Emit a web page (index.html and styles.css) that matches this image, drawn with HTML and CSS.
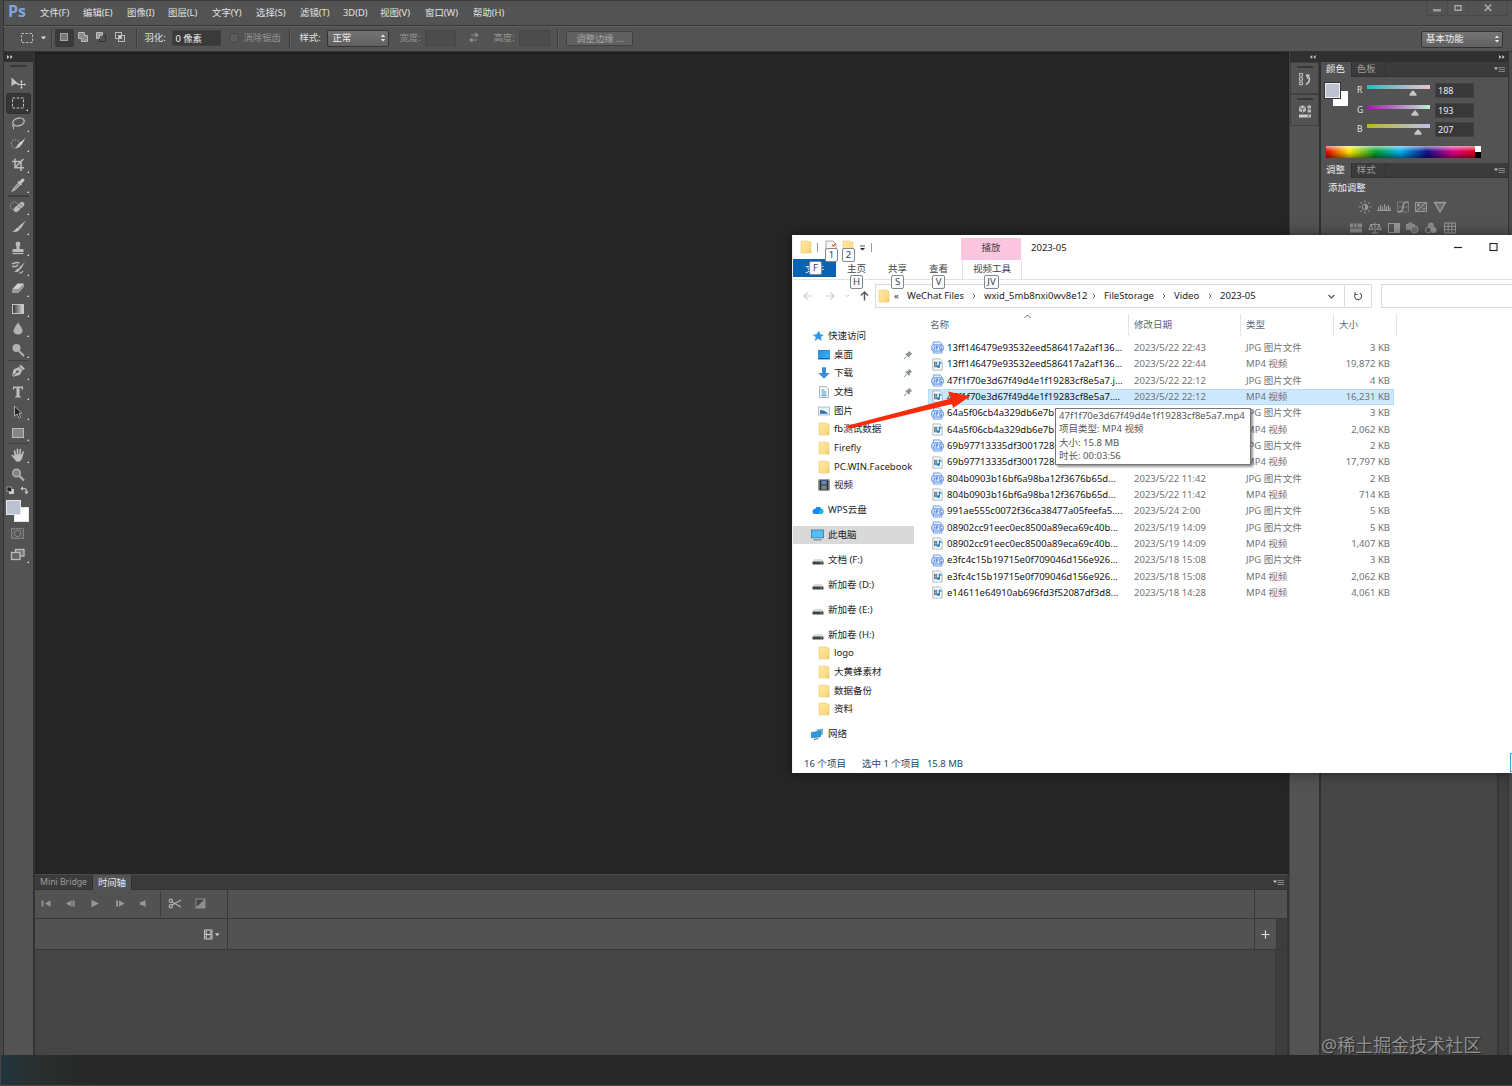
FILE: index.html
```html
<!DOCTYPE html>
<html lang="zh-CN">
<head>
<meta charset="utf-8">
<title>Photoshop</title>
<link rel="stylesheet" href="styles.css">
</head>
<body>
<svg class="defs" width="0" height="0">
  <defs>
    <linearGradient id="gFolder" x1="0" y1="0" x2="1" y2="1"><stop offset="0" stop-color="#ffe9a0"/><stop offset="1" stop-color="#f7d679"/></linearGradient>
    <linearGradient id="gTool" x1="0" y1="0" x2="1" y2="0"><stop offset="0" stop-color="#333"/><stop offset="1" stop-color="#ddd"/></linearGradient>
    <linearGradient id="gScreen" x1="0" y1="0" x2="1" y2="1"><stop offset="0" stop-color="#1a8fe0"/><stop offset="1" stop-color="#43b4f5"/></linearGradient>
  </defs>
  <symbol id="folder" viewBox="0 0 12 14"><path d="M1 1h7.500l1 1H11v11H1z" fill="url(#gFolder)" stroke="#eacb78" stroke-width=".6"/><path d="M9.500 9.500h1.600V13H9.500z" fill="#efc659"/></symbol>
  <symbol id="jpg" viewBox="0 0 14 14"><path d="M2.500 5V1h7l2 2v2M2.500 10.500V13h9v-2.500" fill="#e6effc" stroke="#5f8fe2" stroke-width=".9"/><rect x=".8" y="4.200" width="12.400" height="6.600" rx="2" fill="#e6effc" stroke="#4a80e0" stroke-width="1"/><path d="M3.600 5.600v3q0 .8-1.300.5M5.600 9.700V5.600h1.600v2H5.700M11.600 5.800H9.500v3.600h2V7.900h-.8" fill="none" stroke="#3f76dc" stroke-width=".9"/></symbol>
  <symbol id="mp4" viewBox="0 0 12 14"><path d="M1 1h7.500L11 3.500V13H1z" fill="#fbfcfd" stroke="#98a2aa" stroke-width=".8"/><path d="M2.200 4h3.600v6H2.200z" fill="#5a7588"/><path d="M3 5.200h2M3 7h2M3 8.800h2" stroke="#bdd4e4" stroke-width=".8"/><path d="M8 3.800v5.400M8 4l2.200 2" stroke="#1681d2" stroke-width="1.200" fill="none"/><circle cx="7" cy="9.300" r="1.600" fill="#1681d2"/></symbol>
  <symbol id="pin" viewBox="0 0 10 10"><path d="M6 .8 9.200 4 8 4.500 6.700 5.800 6.300 8 2 3.700 4.200 3.300 5.500 2z" fill="#8a9096"/><path d="M3.800 6.200 1 9" stroke="#8a9096" stroke-width="1"/></symbol>
  <symbol id="drive" viewBox="0 0 12 12"><path d="M2.500 5h7L11.500 7.500H.5z" fill="#d9dcde"/><path d="M.5 7.500h11v3H.5z" fill="#3e4347"/><path d="M8.500 8.800h1.600" stroke="#7fc07f" stroke-width=".8"/></symbol>
  <symbol id="chev" viewBox="0 0 6 8"><path d="M2 2 4 4 2 6" fill="none" stroke="#555" stroke-width="1"/></symbol>
  <symbol id="pmenu" viewBox="0 0 11 8"><path d="M0 1.500h4L2 4z" fill="#c8c8c8"/><path d="M4.500 1.500H11M4.500 3.500H11M4.500 5.500H11" stroke="#8d8d8d" stroke-width=".9"/></symbol>
  <symbol id="updown" viewBox="0 0 6 8"><path d="M.8 3 3 .6 5.200 3zM.8 5 3 7.400 5.200 5z" fill="#e6e6e6"/></symbol>
</svg>

<div class="app">
  <header class="menubar">
    <div class="ps">Ps</div>
    <nav class="menus"><span>文件(F)</span><span>编辑(E)</span><span>图像(I)</span><span>图层(L)</span><span>文字(Y)</span><span>选择(S)</span><span>滤镜(T)</span><span>3D(D)</span><span>视图(V)</span><span>窗口(W)</span><span>帮助(H)</span></nav>
    <div class="winctl">
      <span><svg width="10" height="10"><path d="M1 6h8v2.500H1z" fill="#9b9b9b"/></svg></span>
      <span><svg width="10" height="10"><path d="M2 2.800h6v4.400H2z" fill="none" stroke="#a8a8a8" stroke-width="1.400"/></svg></span>
      <span class="close"><svg width="10" height="10"><path d="M1.800 1.500 8.200 8M8.200 1.500 1.800 8" stroke="#b0b0b0" stroke-width="1.500"/></svg></span>
    </div>
  </header>

  <div class="optbar">
    <svg class="o-marq" width="14" height="12"><rect x="1.500" y="1.500" width="11" height="9" fill="none" stroke="#bdbdbd" stroke-dasharray="2.500 1.500"/></svg>
    <svg class="o-caret" width="5" height="4"><path d="M0 .5h5L2.500 3.500z" fill="#e0e0e0"/></svg>
    <i class="vsep"></i>
    <div class="modes">
      <span class="on"><svg width="12" height="12"><rect x="2.500" y="1.500" width="7" height="7" fill="#777" stroke="#a5a5a5"/></svg></span>
      <span><svg width="12" height="12"><path d="M1.500 .5h6v3h3v6h-6v-3h-3z" fill="#8d8d8d" stroke="#bbb"/></svg></span>
      <span><svg width="12" height="12"><path d="M1.500 .5h6v3h-3v3h-3z" fill="#999" stroke="#bbb"/><path d="M7.500 3.500h3v6h-6v-3" fill="none" stroke="#333"/></svg></span>
      <span><svg width="12" height="12"><rect x="1.500" y=".5" width="6" height="6" fill="none" stroke="#bbb"/><rect x="4.500" y="3.500" width="6" height="6" fill="none" stroke="#bbb"/><path d="M5 4h2v2H5z" fill="#ccc"/></svg></span>
    </div>
    <i class="vsep s2"></i>
    <span class="w-feather">羽化:</span><span class="field f1">0 像素</span>
    <i class="check"></i><span class="dim w-aa">消除锯齿</span>
    <i class="vsep s3"></i>
    <span class="w-style">样式:</span><span class="select sel1">正常<svg width="6" height="8"><use href="#updown"/></svg></span>
    <span class="dim w-w">宽度:</span><span class="field dis"></span>
    <svg class="swap" width="12" height="12"><path d="M3 3h5M4 8h5" stroke="#8f8f8f" stroke-width="1.200"/><path d="M7.500.3 11 3 7.500 5.700zM4.500 5.300 1 8l3.500 2.700z" fill="#8f8f8f"/></svg>
    <span class="dim w-h">高度:</span><span class="field dis"></span>
    <i class="vsep s4"></i>
    <span class="btn">调整边缘 ...</span>
    <span class="select sel2">基本功能<svg width="6" height="8"><use href="#updown"/></svg></span>
  </div>

  <main class="work">
    <aside class="tools">
      <div class="strip"><svg width="8" height="6"><path d="M1 1 3.300 3 1 5zM4.300 1l2.300 2-2.300 2z" fill="#ccc"/></svg></div>
      <div class="grip"></div>
      <div class="tool nf"><svg width="18" height="18"><path d="M2.500 3.500v9l2.600-2.200 4.400-.6z" fill="#c4c4c4"/><path d="M12.500 7v7M9 10.500h7" stroke="#c4c4c4" stroke-width="1.100"/><path d="M12.500 6 14 7.800h-3zM12.500 15 14 13.200h-3zM8 10.500l1.800-1.500v3zM17 10.500l-1.800-1.500v3z" fill="#c4c4c4"/></svg></div>
      <div class="tool active"><svg width="18" height="18"><rect x="3.500" y="4" width="11" height="10" fill="none" stroke="#c4c4c4" stroke-dasharray="2.700 1.500"/></svg></div>
      <div class="tool"><svg width="18" height="18"><ellipse cx="9.500" cy="7" rx="5.800" ry="3.800" transform="rotate(-15 9.500 7)" fill="none" stroke="#bababa" stroke-width="1.400"/><path d="M5 9.500q-2 .2-1.500 1.700t2-.1M4.500 11.800v2.500" fill="none" stroke="#bababa"/></svg></div>
      <div class="tool"><svg width="18" height="18"><circle cx="6.500" cy="9" r="4.300" fill="none" stroke="#aaa" stroke-dasharray="1.500 1.200"/><path d="M16.500 3 10 8.500l2 2z" fill="#ddd"/><path d="M10.500 8.500q-2 .3-2.500 2.500-.8 1.500-2.500 1.500 5 1.500 6.600-2.400z" fill="#c9c9c9"/></svg></div>
      <div class="tool"><svg width="18" height="18"><path d="M6 2.500v9.300h9M3 5.500h9v9.500M14.500 3l-8 8" fill="none" stroke="#bcbcbc" stroke-width="1.500"/></svg></div>
      <div class="tool"><svg width="18" height="18"><path d="m10 6 2.800-3.300q1.400-.7 2.200.2t.2 2.200L12 8z" fill="#c8c8c8"/><path d="m9 5.500 3.500 3.500" stroke="#c8c8c8" stroke-width="1.500"/><path d="M10 7 4.500 12.500 3.500 15l2.300-1.200L11.200 8.500" fill="none" stroke="#bbb" stroke-width="1.200"/></svg></div>
      <i class="hsep"></i>
      <div class="tool"><svg width="18" height="18"><circle cx="5.500" cy="8" r="4" fill="none" stroke="#aaa" stroke-dasharray="1.500 1.200"/><rect x="3.500" y="6.500" width="13" height="5" rx="2.500" transform="rotate(-42 10 9)" fill="#b9b9b9"/><path d="m8.300 7.200 3.500 3.800M10.500 5.500l3 3.200" stroke="#666" stroke-width=".8"/></svg></div>
      <div class="tool"><svg width="18" height="18"><path d="M17 2.500 9 9l2.300 2z" fill="#c2c2c2"/><path d="M9 9.500q-2 .2-3 2.400-1 1.500-3.500 1.600 6 1.500 8.500-2.200z" fill="#c2c2c2"/></svg></div>
      <div class="tool"><svg width="18" height="18"><path d="M7.500 7.500C6 5.500 6.500 2.500 9 2.500s3 3 1.500 5V10h4v3h-11v-3h4z" fill="#bcbcbc"/><path d="M3.500 14.500h11" stroke="#bcbcbc" stroke-width="1.200"/></svg></div>
      <div class="tool"><svg width="18" height="18"><path d="M16 3 9.800 8.700l1.700 1.700zM9.600 9.300q-2 .3-2.500 2-.9 1.200-2.600 1.200 4.500 1.500 6.500-1.700z" fill="#bebebe"/><path d="M10.500 4.200q-3-1.500-5.500.3h-2M3 7.500h4l2-2M10.500 14q2.500 0 3.500-2" fill="none" stroke="#bbb" stroke-width="1.300"/></svg></div>
      <div class="tool"><svg width="18" height="18"><path d="m3 10.500 5.500-6h6.500l-5.500 6z" fill="#d0d0d0"/><path d="M3 10.500h6.500v3.500H3zM9.500 10.500l5.500-6v3.500L9.500 14z" fill="#9b9b9b"/></svg></div>
      <div class="tool"><svg width="18" height="18"><rect x="3.500" y="4.500" width="11" height="9" fill="url(#gTool)" stroke="#c4c4c4"/></svg></div>
      <div class="tool"><svg width="18" height="18"><path d="M9 2.500q4.500 6 4.500 8.200c0 5-9 5-9 0C4.500 8.500 9 2.500 9 2.500" fill="#b2b2b2"/></svg></div>
      <div class="tool"><svg width="18" height="18"><circle cx="7.500" cy="7" r="4" fill="#b2b2b2"/><path d="m10 10 5 5" stroke="#b2b2b2" stroke-width="2"/></svg></div>
      <i class="hsep"></i>
      <div class="tool"><svg width="18" height="18"><path d="m3 15 1.500-7.500L10 5l3.300 3.300L10.700 13z" fill="#bcbcbc"/><path d="m11 3.500 4 4" stroke="#bcbcbc" stroke-width="2.400"/><path d="m3 15 5-5" stroke="#555"/><circle cx="8.500" cy="9.500" r="1.200" fill="#555"/></svg></div>
      <div class="tool"><svg width="18" height="18"><path d="M4 3.500h10v3h-.9q-.3-1.700-2.600-1.700V12.500q0 1 1.500 1.200v.8H6v-.8q1.500-.2 1.500-1.200V4.800q-2.300 0-2.600 1.700H4z" fill="#bdbdbd"/></svg></div>
      <div class="tool"><svg width="18" height="18"><path d="M5.500 3v10.200L8 11l2 4 1.800-1-2-3.700h3z" fill="#222" stroke="#b5b5b5" stroke-width=".9"/></svg></div>
      <div class="tool"><svg width="18" height="18"><rect x="3.500" y="4.500" width="11" height="9" fill="#858585" stroke="#b8b8b8"/></svg></div>
      <i class="hsep"></i>
      <div class="tool"><svg width="18" height="18"><path d="M6 12.500 3.300 9.500M6.500 10 5.600 5M8.500 9V3.200M10.800 9l.6-5.500M12.800 10l1.400-4" stroke="#bfbfbf" stroke-width="1.600" stroke-linecap="round"/><path d="M5.500 8.500h8.300l-.8 4-2 3H7.300L5 12.500z" fill="#bfbfbf"/></svg></div>
      <div class="tool nf"><svg width="18" height="18"><circle cx="7.500" cy="7" r="3.800" fill="#858585" stroke="#b2b2b2" stroke-width="1.400"/><path d="m10.500 10 4.500 4.500" stroke="#b2b2b2" stroke-width="2.200"/></svg></div>
      <div class="mini"><svg width="9" height="9"><rect x="3" y="3" width="5" height="5" fill="#ccc"/><rect x="1" y="1" width="4.500" height="4.500" fill="#222" stroke="#aaa" stroke-width=".8"/></svg><svg width="9" height="9"><path d="M2.500 2.500h2q2 0 2 3.500" fill="none" stroke="#c4c4c4" stroke-width="1.200"/><path d="M3 .3v4.400L.3 2.500zM4.300 5.500h4.400L6.500 8.500z" fill="#c4c4c4"/></svg></div>
      <div class="swatch"><i></i><b></b></div>
      <div class="tool nf qm"><svg width="18" height="18"><rect x="2.500" y="3.500" width="12" height="10" fill="#606060" stroke="#989898" stroke-dasharray="1.500 .8"/><circle cx="8.500" cy="8.500" r="3" fill="#555" stroke="#a5a5a5" stroke-dasharray="1.500 .8"/></svg></div>
      <div class="tool"><svg width="18" height="18"><rect x="6.500" y="3.500" width="8.500" height="6.500" fill="#777" stroke="#bcbcbc" stroke-width="1.300"/><rect x="2.500" y="6.500" width="8.500" height="7" fill="#666" stroke="#bcbcbc" stroke-width="1.300"/></svg></div>
    </aside>

    <section class="center">
      <div class="canvas"></div>
      <div class="timeline">
        <div class="tabs bt"><span class="tab">Mini Bridge</span><span class="tab on">时间轴</span><svg class="pm" width="11" height="8"><use href="#pmenu"/></svg></div>
        <div class="trow r1">
          <div class="ctl">
            <svg width="12" height="10"><path d="M2.500 1.500v6" stroke="#969696" stroke-width="1.800"/><path d="M10.500 1.300v6.400L5 4.500z" fill="#969696"/></svg>
            <svg width="12" height="10"><path d="M6.500 1.300v6.400L1 4.500zM7.500 1.500h2v6h-2z" fill="#969696"/></svg>
            <svg width="12" height="10"><path d="M2.500.8v7.400L10 4.500z" fill="#969696"/></svg>
            <svg width="12" height="10"><path d="M5 1.300v6.400L10.500 4.500zM2 1.500h2v6H2z" fill="#969696"/></svg>
            <svg width="12" height="10"><path d="M2 3h1.800L7.500 1v7L3.800 6H2z" fill="#969696"/></svg>
            <i></i>
            <svg class="cut" width="14" height="12"><path d="M4 4 13 9M4 7 13 2" stroke="#b0b0b0" stroke-width="1.300"/><circle cx="2.800" cy="2.700" r="1.600" fill="none" stroke="#b0b0b0" stroke-width="1.200"/><circle cx="2.800" cy="8.300" r="1.600" fill="none" stroke="#b0b0b0" stroke-width="1.200"/></svg>
            <svg class="fx" width="12" height="12"><path d="M.5.500h10v10H.5z" fill="#8e8e8e"/><path d="M1.500 1.500h8L1.500 9z" fill="#444"/></svg>
          </div><div class="track"></div><div class="tend"></div>
        </div>
        <div class="trow r2">
          <div class="ctl film"><svg width="18" height="11"><path d="M1 .5h8.500v10H1z" fill="#c5c5c5"/><path d="M2.500 1v9M8 1v9" stroke="#555" stroke-dasharray="1.500 1"/><path d="M3.800 1.800h3v3h-3zM3.800 6.200h3v3h-3z" fill="#444"/><path d="M12 4.500h4.500L14.200 7z" fill="#ddd"/></svg></div><div class="track"></div><div class="plus"><svg width="9" height="9"><path d="M4.500.5v8M.5 4.500h8" stroke="#e6e6e6" stroke-width="1.200"/></svg></div><div class="gut"></div>
        </div>
        <div class="tbody"><i></i></div>
      </div>
    </section>

    <aside class="dock">
      <div class="strip r"><svg width="8" height="6"><path d="M3.300 1 1 3l2.300 2zM6.600 1 4.300 3l2.300 2z" fill="#ccc"/></svg></div>
      <div class="dk"><em></em><svg width="14" height="14"><path d="M1.500 .5h3v2.500h-3zM1.500 4.800h3v2.500h-3zM1.500 9.100h3v2.500h-3z" fill="none" stroke="#b5b5b5" stroke-width="1.100"/><path d="M8 11.500q4.500-2.500 3-7.500" fill="none" stroke="#c8c8c8" stroke-width="1.600"/><path d="M7.500 1.500h4.500L9.500 6z" fill="#c8c8c8"/></svg></div>
      <div class="dk"><em></em><svg width="14" height="14"><path d="M4.500.3 8 2v4L4.500 7.700 1 6V2z" fill="#bbb"/><path d="M1.500 2.500 4.500 4 7.500 2.500M4.500 4v3.500" stroke="#555" fill="none" stroke-width=".8"/><path d="M9.500.5H13v3H9.500zM9.500 4.500H13v3H9.500z" fill="#bbb"/><path d="M1 9.500h12v3H1z" fill="#ccc"/><path d="M9.500 11h2" stroke="#444"/></svg></div>
    </aside>

    <aside class="panels">
      <div class="strip r"><svg width="8" height="6"><path d="M1 1 3.300 3 1 5zM4.300 1l2.300 2-2.300 2z" fill="#ccc"/></svg></div>
      <div class="tabs"><span class="tab on">颜色</span><span class="tab">色板</span><svg class="pm" width="11" height="8"><use href="#pmenu"/></svg></div>
      <div class="color">
        <div class="cw"><i></i><b></b></div>
        <div class="sliders">
          <div class="sl"><label>R</label><div class="bar cr"><svg width="8" height="6"><path d="M4 0 7.500 4v1.700h-7V4z" fill="#c4c4c4"/></svg></div><output>188</output></div>
          <div class="sl"><label>G</label><div class="bar cg"><svg width="8" height="6"><path d="M4 0 7.500 4v1.700h-7V4z" fill="#c4c4c4"/></svg></div><output>193</output></div>
          <div class="sl"><label>B</label><div class="bar cb"><svg width="8" height="6"><path d="M4 0 7.500 4v1.700h-7V4z" fill="#c4c4c4"/></svg></div><output>207</output></div>
        </div>
      </div>
      <div class="spec"><i></i></div>
      <div class="tabs"><span class="tab on">调整</span><span class="tab">样式</span><svg class="pm" width="11" height="8"><use href="#pmenu"/></svg></div>
      <div class="adj">
        <p>添加调整</p>
        <div class="ar">
          <svg width="14" height="14"><circle cx="7" cy="7" r="2.800" fill="none" stroke="#aaa"/><path d="M7 4.200a2.800 2.800 0 0 1 0 5.600z" fill="#aaa"/><path d="M7 .5v2M7 11.500v2M.5 7h2M11.500 7h2M2.400 2.400l1.300 1.300M10.300 10.300l1.300 1.300M2.400 11.600l1.300-1.300M10.300 3.700l1.300-1.300" stroke="#aaa" stroke-width="1.100"/></svg>
          <svg width="14" height="14"><path d="M0 10.500h14M1.500 10V7M3.500 10V5M5.500 10V6.500M7.500 10V4M9.500 10V6M11.500 10V5M13 10V7.500" stroke="#aaa" stroke-width="1.200"/></svg>
          <svg width="14" height="14"><path d="M1.500 2h11v10h-11zM1.500 7h11M7 2v10" fill="none" stroke="#858585"/><path d="M1.500 12Q7 12 7 7t5.500-5" fill="none" stroke="#bbb" stroke-width="1.200"/></svg>
          <svg width="14" height="14"><path d="M1.500 2.500h11v9h-11z" fill="#666" stroke="#aaa"/><path d="m2 11.500 10-9M3 5h3M4.500 3.500v3M8.500 9h3" stroke="#bbb"/></svg>
          <svg width="14" height="14"><path d="M1.500 2.500h11L7 12z" fill="#777" stroke="#b0b0b0" stroke-width="1.300"/></svg>
        </div>
        <div class="ar a2">
          <svg width="14" height="14"><path d="M1 2.500h12v9H1z" fill="#999"/><path d="M4.500 2.500v4M8 2.500v4M1 7h12" stroke="#555"/></svg>
          <svg width="14" height="14"><path d="M7 1.500v10M2 3.500h10M4 12h6M3 4 1 8.500h4zM11 4 9 8.500h4z" fill="none" stroke="#aaa" stroke-width="1.100"/></svg>
          <svg width="14" height="14"><path d="M1.500 2.500h11v9h-11z" fill="none" stroke="#aaa"/><path d="M7 3h5v8H7z" fill="#aaa"/></svg>
          <svg width="14" height="14"><path d="M1 3h2l1-1.500h3L8 3h2v6H1z" fill="#999"/><circle cx="9.500" cy="8.500" r="3.500" fill="#777" stroke="#aaa"/></svg>
          <svg width="14" height="14"><circle cx="7" cy="4.500" r="3" fill="#999"/><circle cx="4.500" cy="9" r="3" fill="none" stroke="#aaa"/><circle cx="9.500" cy="9" r="3" fill="#aaa"/></svg>
          <svg width="14" height="14"><path d="M1.500 2h11v10h-11zM1.500 5.300h11M1.500 8.600h11M5.200 2v10M8.800 2v10" fill="none" stroke="#aaa"/></svg>
        </div>
      </div>
      <div class="rest"><i></i></div>
    </aside>
    <div class="edge"></div>
  </main>
  <div class="watermark">@稀土掘金技术社区</div>
</div>
<footer class="taskbar"></footer>

<section class="explorer">
  <div class="xtitle">
    <svg class="t1" width="12" height="14"><use href="#folder"/></svg><i class="tb"></i>
    <svg class="t2" width="12" height="14"><path d="M1 1h7l3 3v9H1z" fill="#f5f5f5" stroke="#999" stroke-width=".8"/><path d="m7 5 1.500 1L10.500 3.500" stroke="#e0522c" fill="none" stroke-width="1.200"/></svg>
    <svg class="t3" width="12" height="14"><use href="#folder"/></svg>
    <svg class="t4" width="7" height="7"><path d="M1 2h5" stroke="#222" stroke-width=".8"/><path d="M1 4h5L3.500 6.500z" fill="#222"/></svg><i class="tb"></i>
    <span class="play">播放</span><span class="tt">2023-05</span>
    <svg class="xm" width="9" height="9"><path d="M0 4.500h8" stroke="#222" stroke-width="1.200"/></svg>
    <svg class="xx" width="9" height="9"><rect x="1" y=".5" width="7" height="7" fill="none" stroke="#222" stroke-width="1.100"/></svg>
  </div>
  <div class="xtabs"><span class="file">文件</span><span class="h1">主页</span><span class="h2">共享</span><span class="h3">查看</span><span class="h4">视频工具</span></div>
  <kbd class="k1">1</kbd><kbd class="k2">2</kbd><kbd class="kf">F</kbd><kbd class="kh">H</kbd><kbd class="ks">S</kbd><kbd class="kv">V</kbd><kbd class="kj">JV</kbd>
  <div class="xaddr">
    <svg class="nav" width="70" height="12"><path d="M9 6H1M4.500 2.500 1 6l3.500 3.500M23 6h8M27.500 2.500 31 6l-3.500 3.500" fill="none" stroke="#ccc" stroke-width="1.100"/><path d="m42.500 5 1.700 1.500L46 5" fill="none" stroke="#bbb" stroke-width=".8"/><path d="M61.500 10.500V2M58 5.500 61.500 2 65 5.500" fill="none" stroke="#555" stroke-width="1.400"/></svg>
    <div class="box"><svg width="12" height="14"><use href="#folder"/></svg><span class="c0">«</span><span class="c1">WeChat Files</span><svg class="cv" width="6" height="8"><use href="#chev"/></svg><span class="c2">wxid_5mb8nxi0wv8e12</span><svg class="cv" width="6" height="8"><use href="#chev"/></svg><span class="c3">FileStorage</span><svg class="cv" width="6" height="8"><use href="#chev"/></svg><span class="c4">Video</span><svg class="cv" width="6" height="8"><use href="#chev"/></svg><span class="c5">2023-05</span><svg class="dd" width="9" height="7"><path d="m1.500 2 3 3 3-3" fill="none" stroke="#555" stroke-width="1.200"/></svg></div>
    <div class="refresh"><svg width="10" height="10"><path d="M2.600 2.700A3.500 3.500 0 1 0 7 2.200" fill="none" stroke="#555" stroke-width="1.100"/><path d="M2 1v2.500h2.700" fill="none" stroke="#555"/></svg></div>
    <div class="search"></div>
  </div>
  <div class="xbody">
    <nav class="side">
      <div class="n"><svg width="12" height="12"><path d="m7 .8 1.300 3.400 3.600.5-2.900 2.200.5 4L6.300 8.700 2.500 11 3.800 7 .5 4.700l3.700-.3z" fill="#2d9be8"/></svg>快速访问</div>
      <div class="n s"><svg width="12" height="12"><rect x=".3" y="1.300" width="11.400" height="8.800" fill="url(#gScreen)" stroke="#0e78c4" stroke-width=".6"/><path d="M1 9.500h10" stroke="#0c5fa5"/></svg>桌面<svg class="pin" width="10" height="10"><use href="#pin"/></svg></div>
      <div class="n s"><svg width="12" height="12"><path d="M4 .3h4V6h3.700L6 11.800.3 6H4z" fill="#3c8edb"/></svg>下载<svg class="pin" width="10" height="10"><use href="#pin"/></svg></div>
      <div class="n s"><svg width="12" height="12"><path d="M1.500.5h6.700L10.500 3v8.500h-9z" fill="#f4f9fc" stroke="#8c9aa5" stroke-width=".7"/><path d="M3.500 4h3M3.500 6h5M3.500 8h5M3.500 9.800h5" stroke="#4d98cc"/></svg>文档<svg class="pin" width="10" height="10"><use href="#pin"/></svg></div>
      <div class="n s"><svg width="12" height="12"><rect x=".5" y="2" width="11" height="8" fill="#e9f3fa" stroke="#9aa6ae" stroke-width=".7"/><path d="M2 8.800V5l3 .5 2.500 1 2.800 2.300z" fill="#2b6fae"/></svg>图片</div>
      <div class="n s"><svg width="12" height="14"><use href="#folder"/></svg>fb测试数据</div>
      <div class="n s"><svg width="12" height="14"><use href="#folder"/></svg>Firefly</div>
      <div class="n s"><svg width="12" height="14"><use href="#folder"/></svg>PC.WIN.Facebook</div>
      <div class="n s"><svg width="12" height="12"><path d="M.5.500h11v11H.5z" fill="#30363c"/><path d="M3.200 1.500h5.600v4H3.200z" fill="#588bb5"/><path d="M3.200 6.500h5.600v4H3.200z" fill="#7d8a78"/><path d="M1.500 1v10M10.500 1v10" stroke="#ccc" stroke-width=".8" stroke-dasharray="1 1.200"/></svg>视频</div>
      <div class="n g"><svg width="12" height="12"><path d="M3 10a2.500 2.500 0 0 1 0-5 3.500 3.500 0 0 1 6.500 0A2.600 2.600 0 0 1 9.500 10z" fill="#1c86ee"/><path d="M6.500 10 9 4.500A2.800 2.800 0 0 1 9.500 10z" fill="#18c1d8"/></svg>WPS云盘</div>
      <div class="n g pc"><svg width="13" height="12"><rect x=".5" y="1" width="12" height="7.800" fill="#53bdf4" stroke="#3678a8" stroke-width=".8"/><path d="M2.500 10.800h8" stroke="#6f8796" stroke-width="1.200"/></svg>此电脑</div>
      <div class="n g"><svg width="12" height="12"><use href="#drive"/></svg>文档 (F:)</div>
      <div class="n g"><svg width="12" height="12"><use href="#drive"/></svg>新加卷 (D:)</div>
      <div class="n g"><svg width="12" height="12"><use href="#drive"/></svg>新加卷 (E:)</div>
      <div class="n g"><svg width="12" height="12"><use href="#drive"/></svg>新加卷 (H:)</div>
      <div class="n s"><svg width="12" height="14"><use href="#folder"/></svg>logo</div>
      <div class="n s"><svg width="12" height="14"><use href="#folder"/></svg>大黄蜂素材</div>
      <div class="n s"><svg width="12" height="14"><use href="#folder"/></svg>数据备份</div>
      <div class="n s"><svg width="12" height="14"><use href="#folder"/></svg>资料</div>
      <div class="n g net"><svg width="13" height="12"><path d="M5 1.500 12 .5v6l-2 1z" fill="#6fb6e4"/><path d="m.5 4.500 9-1.500v5.800l-9 1z" fill="#2c9be2" stroke="#1c6da5" stroke-width=".6"/><path d="M3 11.300 7.500 10.500" stroke="#5a7d93" stroke-width="1.200"/></svg>网络</div>
    </nav>
    <div class="list">
      <div class="head"><span>名称</span><span>修改日期</span><span>类型</span><span>大小</span><svg class="sort" width="7" height="5"><path d="M.5 4 3.500 1l3 3" fill="none" stroke="#666"/></svg></div>
      <div class="row"><svg width="13" height="13"><use href="#jpg"/></svg><span>13ff146479e93532eed586417a2af136...</span><span>2023/5/22 22:43</span><span>JPG 图片文件</span><span>3 KB</span></div>
      <div class="row"><svg width="13" height="13"><use href="#mp4"/></svg><span>13ff146479e93532eed586417a2af136...</span><span>2023/5/22 22:44</span><span>MP4 视频</span><span>19,872 KB</span></div>
      <div class="row"><svg width="13" height="13"><use href="#jpg"/></svg><span>47f1f70e3d67f49d4e1f19283cf8e5a7.j...</span><span>2023/5/22 22:12</span><span>JPG 图片文件</span><span>4 KB</span></div>
      <div class="row sel"><svg width="13" height="13"><use href="#mp4"/></svg><span>47f1f70e3d67f49d4e1f19283cf8e5a7....</span><span>2023/5/22 22:12</span><span>MP4 视频</span><span>16,231 KB</span></div>
      <div class="row"><svg width="13" height="13"><use href="#jpg"/></svg><span>64a5f06cb4a329db6e7b</span><span></span><span>JPG 图片文件</span><span>3 KB</span></div>
      <div class="row"><svg width="13" height="13"><use href="#mp4"/></svg><span>64a5f06cb4a329db6e7b</span><span></span><span>MP4 视频</span><span>2,062 KB</span></div>
      <div class="row"><svg width="13" height="13"><use href="#jpg"/></svg><span>69b97713335df3001728</span><span></span><span>JPG 图片文件</span><span>2 KB</span></div>
      <div class="row"><svg width="13" height="13"><use href="#mp4"/></svg><span>69b97713335df3001728</span><span></span><span>MP4 视频</span><span>17,797 KB</span></div>
      <div class="row"><svg width="13" height="13"><use href="#jpg"/></svg><span>804b0903b16bf6a98ba12f3676b65d...</span><span>2023/5/22 11:42</span><span>JPG 图片文件</span><span>2 KB</span></div>
      <div class="row"><svg width="13" height="13"><use href="#mp4"/></svg><span>804b0903b16bf6a98ba12f3676b65d...</span><span>2023/5/22 11:42</span><span>MP4 视频</span><span>714 KB</span></div>
      <div class="row"><svg width="13" height="13"><use href="#jpg"/></svg><span>991ae555c0072f36ca38477a05feefa5....</span><span>2023/5/24 2:00</span><span>JPG 图片文件</span><span>5 KB</span></div>
      <div class="row"><svg width="13" height="13"><use href="#jpg"/></svg><span>08902cc91eec0ec8500a89eca69c40b...</span><span>2023/5/19 14:09</span><span>JPG 图片文件</span><span>5 KB</span></div>
      <div class="row"><svg width="13" height="13"><use href="#mp4"/></svg><span>08902cc91eec0ec8500a89eca69c40b...</span><span>2023/5/19 14:09</span><span>MP4 视频</span><span>1,407 KB</span></div>
      <div class="row"><svg width="13" height="13"><use href="#jpg"/></svg><span>e3fc4c15b19715e0f709046d156e926...</span><span>2023/5/18 15:08</span><span>JPG 图片文件</span><span>3 KB</span></div>
      <div class="row"><svg width="13" height="13"><use href="#mp4"/></svg><span>e3fc4c15b19715e0f709046d156e926...</span><span>2023/5/18 15:08</span><span>MP4 视频</span><span>2,062 KB</span></div>
      <div class="row"><svg width="13" height="13"><use href="#mp4"/></svg><span>e14611e64910ab696fd3f52087df3d8...</span><span>2023/5/18 14:28</span><span>MP4 视频</span><span>4,061 KB</span></div>
    </div>
  </div>
  <div class="status"><span>16 个项目</span><span>选中 1 个项目</span><span>15.8 MB</span><i></i></div>
  <div class="tip">47f1f70e3d67f49d4e1f19283cf8e5a7.mp4<br>项目类型: MP4 视频<br>大小: 15.8 MB<br>时长: 00:03:56</div>
  <svg class="arrow" width="130" height="44"><path d="M4 36 109 8.500 106 1.500 128 6.500 111 18 110 14 8 38.500z" fill="#fb2b08"/></svg>
</section>
</body>
</html>
```
FILE: styles.css
```css
* { box-sizing: border-box; }
body { margin: 0; width: 1512px; height: 1086px; overflow: hidden; background: #272727; color: #e2e2e2; font: 9.400px/14px "Noto Sans", "Noto Sans CJK SC", sans-serif; display: flex; flex-direction: column; }
svg { display: block; flex: none; }
span { white-space: nowrap; }
i, b, em { display: block; font-style: normal; }
.defs { position: absolute; }
.app { position: relative; height: 1055px; display: flex; flex-direction: column; background: #535353; border-left: 3px solid #474747; border-top: 1px solid #3c3c3c; box-shadow: inset 1px 0 #333; }

.menubar { height: 24px; display: flex; padding-left: 5px; }
.ps { width: 32px; font: bold 16px/21px "Open Sans", sans-serif; color: #7ca6dc; }
.menus { display: grid; grid-template-columns: 43px 44px 41px 44px 44px 44px 43px 37px 45px 48px 50px; line-height: 23px; }
.winctl { margin-left: auto; margin-right: 4px; height: 15px; display: flex; border: 1px solid #484848; border-top: 0; }
.winctl span { width: 21px; border-right: 1px solid #494949; display: flex; justify-content: center; padding-top: 2px; }
.winctl .close { width: 38px; border: 0; }

.optbar { height: 27px; display: flex; align-items: center; border-top: 1px solid #383838; box-shadow: inset 0 1px #606060; padding-left: 17px; padding-bottom: 1px; border-bottom: 1px solid #333; }
.o-caret { margin: 0 5px 0 7px; }
.vsep { width: 2px; height: 19px; background: #3e3e3e; border-right: 1px solid #5e5e5e; }
.modes { display: flex; margin-left: 2px; }
.modes span { width: 18.600px; height: 18px; display: grid; place-items: center; }
.modes .on { background: #3a3a3a; border-radius: 2px; }
.s2 { margin: 0 6px 0 7px; }
.w-feather { width: 28px; }
.field { height: 16px; background: #3a3a3a; border: 1px solid #404040; line-height: 15px; padding-left: 2px; color: #eee; }
.f1 { width: 49px; }
.dis { width: 31px; background: #4c4c4c; border-color: #464646; }
.check { width: 10px; height: 10px; border: 1px solid #444; background: #5a5a5a; margin: 0 4px 0 8px; border-radius: 2px; }
.dim { color: #929292; }
.w-aa { width: 46px; }
.s3 { margin-right: 8px; }
.w-style { width: 28px; }
.select { height: 17px; border: 1px solid #333; border-radius: 2px; background: linear-gradient(#747474, #606060); display: flex; align-items: center; justify-content: space-between; padding: 0 2px 0 4px; color: #f0f0f0; }
.sel1 { width: 62px; margin-right: 10px; }
.w-w, .w-h { width: 26px; }
.swap { margin: 0 13px 0 12px; }
.s4 { margin: 0 7px; }
.btn { width: 67px; height: 15px; border: 1px solid #414141; border-radius: 2px; background: #616161; color: #a5a5a5; text-align: center; line-height: 13px; }
.sel2 { width: 82px; margin-left: auto; margin-right: 9px; margin-top: 2px; }

.work { flex: 1; display: flex; min-height: 0; }
.strip { height: 10px; background: #303030; padding: 2px 2px; display: flex; align-items: center; flex: none; }
.strip.r { justify-content: flex-end; }
.tools { width: 32px; border-left: 1px solid #333; border-right: 2px solid #333; background: #535353; display: flex; flex-direction: column; }
.grip { height: 10.800px; margin: 0 6px; border-top: 3px solid #535353; background: linear-gradient(#383838 2px, transparent 2px); flex: none; }
.tool { height: 20.400px; margin: 0 2px; padding-left: 3px; position: relative; display: flex; align-items: center; flex: none; }
.tool::after { content: ""; position: absolute; right: 2px; bottom: 2px; border: 1px solid; border-color: transparent #ddd #ddd transparent; }
.tool.nf::after { display: none; }
.active { background: #363636; border: 1px solid #2f2f2f; border-radius: 3px; padding-left: 2px; }
.hsep { height: 1.500px; background: #3e3e3e; margin: 0 4px; flex: none; }
.mini { display: flex; gap: 5px; padding: 1px 2px 0; height: 14px; }
.swatch { position: relative; height: 26px; }
.swatch i, .swatch b { position: absolute; width: 15px; height: 15px; border: 1px solid #e5e5e5; }
.swatch i { left: 2px; top: 1px; background: #bcc1cf; z-index: 1; }
.swatch b { left: 10px; top: 8px; background: #fff; }
.qm { margin-top: -1px; }

.center { width: 1254px; display: flex; flex-direction: column; background: #262626; }
.canvas { height: 822px; box-shadow: inset 0 2px 3px #1e1e1e; }
.timeline { flex: 1; display: flex; flex-direction: column; background: #454545; border-top: 1px solid #4a4a4a; border-right: 2px solid #333; }
.tabs { height: 15px; background: #3b3b3b; display: flex; border-bottom: 1px solid #333; flex: none; }
.tab { color: #9c9c9c; padding: 0 5px; line-height: 14px; border-right: 1px solid #323232; }
.tab.on { background: #535353; color: #eaeaea; height: 15px; }
.pm { margin: 4px 3px 0 auto; }
.bt .tab { font-size: 8.800px; line-height: 15px; letter-spacing: -.06px; }
.bt .tab.on { font-size: 9.400px; }
.trow { display: flex; flex: none; background: #383838; gap: 1px; }
.trow > div { background: #525252; }
.r1 { height: 28px; }
.r2 { height: 32px; padding: 1px 0; }
.ctl { width: 192px; display: flex; align-items: center; padding-left: 5px; gap: 12.500px; }
.ctl i { width: 1px; height: 24px; background: #3b3b3b; margin-left: -3px; }
.ctl .cut { margin-left: -5px; }
.film { justify-content: flex-end; padding-right: 6px; }
.track { flex: 1; }
.tend { width: 32px; }
.plus { width: 21px; display: grid; place-items: center; }
.trow .gut { width: 10px; background: #3d3d3d; }
.tbody { flex: 1; display: flex; justify-content: flex-end; }
.tbody i { width: 12px; background: #3d3d3d; border-left: 1px solid #383838; }

.dock { width: 32px; background: #535353; border-left: 1px solid #424242; border-right: 2px solid #303030; }
.dk { height: 32px; border: 1px solid #404040; display: flex; flex-direction: column; align-items: center; gap: 3px; padding-top: 3px; }
.dk em { width: 16px; height: 2px; background: #373737; margin-bottom: 2px; }
.panels { width: 187px; background: #535353; display: flex; flex-direction: column; }
.panels .tab { padding: 0 6px 0 5px; line-height: 13px; }
.panels .tab + .tab { padding-left: 5px; padding-right: 9px; }
.color { display: flex; height: 69px; padding-top: 6px; }
.cw { position: relative; width: 36px; }
.cw i, .cw b { position: absolute; width: 15px; height: 15px; }
.cw i { left: 4px; top: 0; background: #bcc1cf; border: 1px solid #eee; outline: 1px solid #333; z-index: 1; }
.cw b { left: 12px; top: 8px; background: #fff; }
.sl { display: flex; height: 19.500px; }
.sl label { width: 10px; font-size: 8.500px; line-height: 14px; }
.bar { width: 63px; height: 4px; margin-top: 2px; }
.bar svg { margin-top: 5px; }
.cr { background: linear-gradient(90deg, #30b9c0, #efc1cf); } .cr svg { margin-left: 42px; }
.cg { background: linear-gradient(90deg, #b012b8, #bcefcf); } .cg svg { margin-left: 44px; }
.cb { background: linear-gradient(90deg, #b4b820, #bcc1f0); } .cb svg { margin-left: 47px; }
.sl output { margin-left: 5px; width: 39px; height: 15px; background: #383838; border: 1px solid #424242; padding-left: 2px; line-height: 14px; color: #eee; font-size: 9px; }
.spec { width: 155px; height: 12px; margin-left: 5px; margin-bottom: 5px; display: grid; grid-template-columns: 1fr 6px; background: linear-gradient(#fff9 0, #fff0 45%, #0000 50%, #0007 100%), linear-gradient(90deg, #e40000, #ffe800 15%, #00a030 32%, #00b0f0 48%, #10108c 65%, #e00088 82%, #e40000); }
.spec i { grid-column: 2; height: 12px; background: linear-gradient(#fff 50%, #000 50%); }
.adj { height: 69px; padding-left: 7px; }
.adj p { margin: 3px 0 5px; line-height: 14px; color: #eee; }
.ar { display: flex; gap: 4.800px; padding-left: 30px; opacity: .8; }
.a2 { padding-left: 21px; margin-top: 7px; }
.rest { flex: 1; background: #464646; display: flex; justify-content: flex-end; border-top: 1px solid #333; }
.rest i { width: 11px; background: #3f3f3f; border-left: 2px solid #363636; }
.edge { flex: 1; border-left: 1px solid #333; background: #4a4a4a; }
.watermark { position: absolute; left: 1318px; top: 1034px; font-size: 18px; line-height: 20px; color: #909090; text-shadow: 1px 1px 1px #222; white-space: nowrap; }
.taskbar { height: 31px; background: linear-gradient(90deg, #23343f, #29302f 30px, #272727 90px); border-bottom: 1px solid #4a4a4a; border-left: 1px solid #444; }

.explorer { position: absolute; left: 792px; top: 235px; width: 720px; height: 538px; background: #fff; color: #1c1c1c; font-size: 9.530px; border-left: 1px solid #f2f2f2; display: flex; flex-direction: column; overflow: hidden; box-shadow: 0 0 12px #0008; }
.xtitle { height: 24px; display: flex; align-items: center; padding: 0 14px 0 7px; flex: none; }
.tb { width: 1px; height: 9px; background: #999; }
.t1 { margin-right: 5px; } .t2 { margin-left: 7px; } .t3 { margin: 0 5px; } .t4 { margin-right: 5px; }
.play { margin-left: 89px; width: 60px; height: 22px; margin-top: 3px; line-height: 20px; background: #fcc5de; text-align: center; color: #444; }
.tt { margin-left: 10px; margin-top: 1px; }
.xm { margin-left: auto; margin-right: 26px; }
.xtabs { height: 21px; display: flex; border-bottom: 1px solid #e3e3e3; line-height: 20px; color: #444; flex: none; }
.file { width: 43px; background: #0a62b1; color: #fff; height: 18px; text-align: center; }
.h1 { margin-left: 11px; width: 41px; } .h2 { width: 41px; } .h3 { width: 33px; }
.h4 { width: 60px; text-align: center; border: 1px solid #eddde5; border-width: 0 1px; }
kbd { position: absolute; font: inherit; height: 14px; line-height: 12px; width: 13px; text-align: center; border: 1px solid #808890; border-radius: 2px; background: #fbfcfd; color: #38424f; }
.k1 { left: 32px; top: 13px; } .k2 { left: 49px; top: 13px; } .kf { left: 16px; top: 26px; } .kh { left: 57px; top: 40px; } .ks { left: 98px; top: 40px; } .kv { left: 139px; top: 40px; } .kj { left: 191px; top: 40px; width: 15px; }
.xaddr { display: flex; height: 34px; padding-top: 4px; flex: none; }
.nav { margin: 6px 2px 0 10px; }
.box { width: 470px; height: 24px; border: 1px solid #dcdcdc; display: flex; align-items: center; padding-left: 2px; margin-right: -1px; }
.c0 { width: 13px; margin-left: 4px; } .c1 { width: 64px; } .c2 { width: 107px; } .c3 { width: 57px; } .c4 { width: 33px; }
.cv { margin: 0 7px 0 0; }
.dd { margin: 0 8px 0 auto; }
.refresh { width: 28px; height: 24px; border: 1px solid #dcdcdc; display: grid; place-items: center; margin-right: 9px; }
.search { flex: 1; height: 24px; border: 1px solid #dcdcdc; border-right: 0; }
.xbody { flex: 1; display: flex; min-height: 0; }
.side { width: 135px; padding-top: 12.500px; }
.n { height: 18.700px; width: 121px; padding-left: 19px; display: flex; align-items: center; gap: 4px; white-space: nowrap; line-height: 18px; }
.s { padding-left: 25px; }
.g { margin-top: 6.200px; }
.pc { background: #d9d9d9; padding-left: 18px; }
.net { padding-left: 18px; }
.pin { margin-left: auto; margin-right: 1px; }
.list { width: 469px; }
.head { position: relative; display: grid; grid-template-columns: 201px 112px 93px 63px; height: 23px; margin-bottom: 2.800px; line-height: 21px; color: #56687e; }
.head span { border-right: 1px solid #e5e5e5; padding-left: 5px; }
.head span:first-child { padding-left: 2px; }
.sort { position: absolute; left: 96px; top: 0; }
.row { height: 16.330px; width: 466px; display: grid; grid-template-columns: 19px 187px 112px 82px 62px; line-height: 16px; color: #727272; align-items: center; }
.row svg { margin-left: 3px; }
.row span:nth-child(2) { color: #161616; }
.row span:last-child { text-align: right; }
.sel { background: #cce8ff; box-shadow: inset 0 0 0 1px #b5dcf8; }
.status { height: 20px; display: flex; padding-left: 11px; gap: 16px; line-height: 21px; color: #2b4566; position: relative; }
.status span + span + span { margin-left: -9px; }
.status i { position: absolute; right: 0; top: 0; width: 2px; height: 19px; border: 1px solid #3aa5d8; border-right: 0; }
.tip { position: absolute; left: 262px; top: 173px; width: 196px; height: 57px; background: #fff; border: 1px solid #777; padding: 0 3px; line-height: 13.300px; color: #575757; box-shadow: 2px 2px 2px #0006; white-space: nowrap; }
.arrow { position: absolute; left: 49px; top: 155px; }
```
